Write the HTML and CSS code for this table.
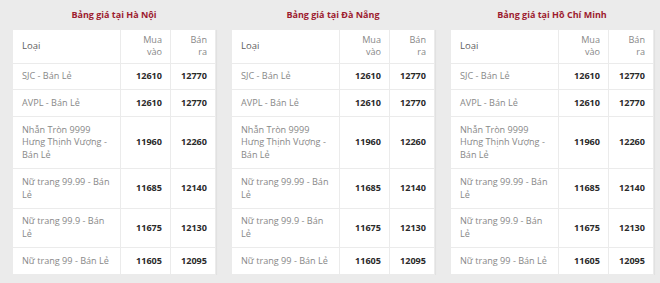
FILE: index.html
```html
<!DOCTYPE html>
<html lang="vi">
<head>
<meta charset="utf-8">
<title>Bảng giá vàng</title>
<link rel="stylesheet" href="styles.css">
</head>
<body>
<div class="boards">
  <section class="board">
    <h3 class="board-title">Bảng giá tại Hà Nội</h3>
    <table class="price-table">
      <colgroup><col class="c-name"><col class="c-buy"><col class="c-sell"></colgroup>
      <thead><tr><th class="name">Loại</th><th class="num">Mua vào</th><th class="num">Bán ra</th></tr></thead>
      <tbody>
        <tr><td class="name">SJC - Bán Lẻ</td><td class="num">12610</td><td class="num">12770</td></tr>
        <tr><td class="name">AVPL - Bán Lẻ</td><td class="num">12610</td><td class="num">12770</td></tr>
        <tr><td class="name">Nhẫn Tròn 9999 Hưng Thịnh Vượng - Bán Lẻ</td><td class="num">11960</td><td class="num">12260</td></tr>
        <tr><td class="name">Nữ trang 99.99 - Bán Lẻ</td><td class="num">11685</td><td class="num">12140</td></tr>
        <tr><td class="name">Nữ trang 99.9 - Bán Lẻ</td><td class="num">11675</td><td class="num">12130</td></tr>
        <tr><td class="name">Nữ trang 99 - Bán Lẻ</td><td class="num">11605</td><td class="num">12095</td></tr>
      </tbody>
    </table>
  </section>
  <section class="board">
    <h3 class="board-title">Bảng giá tại Đà Nẵng</h3>
    <table class="price-table">
      <colgroup><col class="c-name"><col class="c-buy"><col class="c-sell"></colgroup>
      <thead><tr><th class="name">Loại</th><th class="num">Mua vào</th><th class="num">Bán ra</th></tr></thead>
      <tbody>
        <tr><td class="name">SJC - Bán Lẻ</td><td class="num">12610</td><td class="num">12770</td></tr>
        <tr><td class="name">AVPL - Bán Lẻ</td><td class="num">12610</td><td class="num">12770</td></tr>
        <tr><td class="name">Nhẫn Tròn 9999 Hưng Thịnh Vượng - Bán Lẻ</td><td class="num">11960</td><td class="num">12260</td></tr>
        <tr><td class="name">Nữ trang 99.99 - Bán Lẻ</td><td class="num">11685</td><td class="num">12140</td></tr>
        <tr><td class="name">Nữ trang 99.9 - Bán Lẻ</td><td class="num">11675</td><td class="num">12130</td></tr>
        <tr><td class="name">Nữ trang 99 - Bán Lẻ</td><td class="num">11605</td><td class="num">12095</td></tr>
      </tbody>
    </table>
  </section>
  <section class="board">
    <h3 class="board-title">Bảng giá tại Hồ Chí Minh</h3>
    <table class="price-table">
      <colgroup><col class="c-name"><col class="c-buy"><col class="c-sell"></colgroup>
      <thead><tr><th class="name">Loại</th><th class="num">Mua vào</th><th class="num">Bán ra</th></tr></thead>
      <tbody>
        <tr><td class="name">SJC - Bán Lẻ</td><td class="num">12610</td><td class="num">12770</td></tr>
        <tr><td class="name">AVPL - Bán Lẻ</td><td class="num">12610</td><td class="num">12770</td></tr>
        <tr><td class="name">Nhẫn Tròn 9999 Hưng Thịnh Vượng - Bán Lẻ</td><td class="num">11960</td><td class="num">12260</td></tr>
        <tr><td class="name">Nữ trang 99.99 - Bán Lẻ</td><td class="num">11685</td><td class="num">12140</td></tr>
        <tr><td class="name">Nữ trang 99.9 - Bán Lẻ</td><td class="num">11675</td><td class="num">12130</td></tr>
        <tr><td class="name">Nữ trang 99 - Bán Lẻ</td><td class="num">11605</td><td class="num">12095</td></tr>
      </tbody>
    </table>
  </section>
</div>
</body>
</html>
```
FILE: styles.css
```css
html, body {
  margin: 0;
  padding: 0;
  background: #ebebeb;
}
body {
  font-family: "Open Sans", "Liberation Sans", sans-serif;
  font-size: 9.1px;
  color: #888;
}
.boards {
  display: grid;
  grid-template-columns: repeat(3, 1fr);
  gap: 15px;
  padding: 0 8px 0 12px;
}
.board-title {
  margin: 0;
  padding: 7px 0 7px;
  line-height: 15px;
  font-size: 9px;
  font-weight: 700;
  text-align: center;
  color: #9d1b2f;
}
.price-table {
  width: 100%;
  table-layout: fixed;
  border-collapse: collapse;
  background: #fff;
  border: 1px solid #e0e0e0;
  box-shadow: 1px 1px 1px rgba(0,0,0,0.04);
}
.c-name { width: 108px; }
.c-buy { width: 50px; }
.c-sell { width: 45px; }
.price-table th,
.price-table td {
  line-height: 12.75px;
  border: 1px solid #ebebeb;
  vertical-align: middle;
}
.price-table th {
  padding: 3.5px 8px 3.5px 9px;
  font-weight: 400;
  color: #888;
}
.price-table td {
  padding: 6.5px 8px 6.5px 9px;
}
.price-table th.name {
  text-align: left;
  font-size: 9.5px;
  color: #5e5e5e;
}
.price-table th.num {
  text-align: right;
}
.price-table td.name {
  text-align: left;
  color: #888;
}
.price-table td.num {
  text-align: right;
  font-weight: 700;
  color: #2a2a2a;
}
```
